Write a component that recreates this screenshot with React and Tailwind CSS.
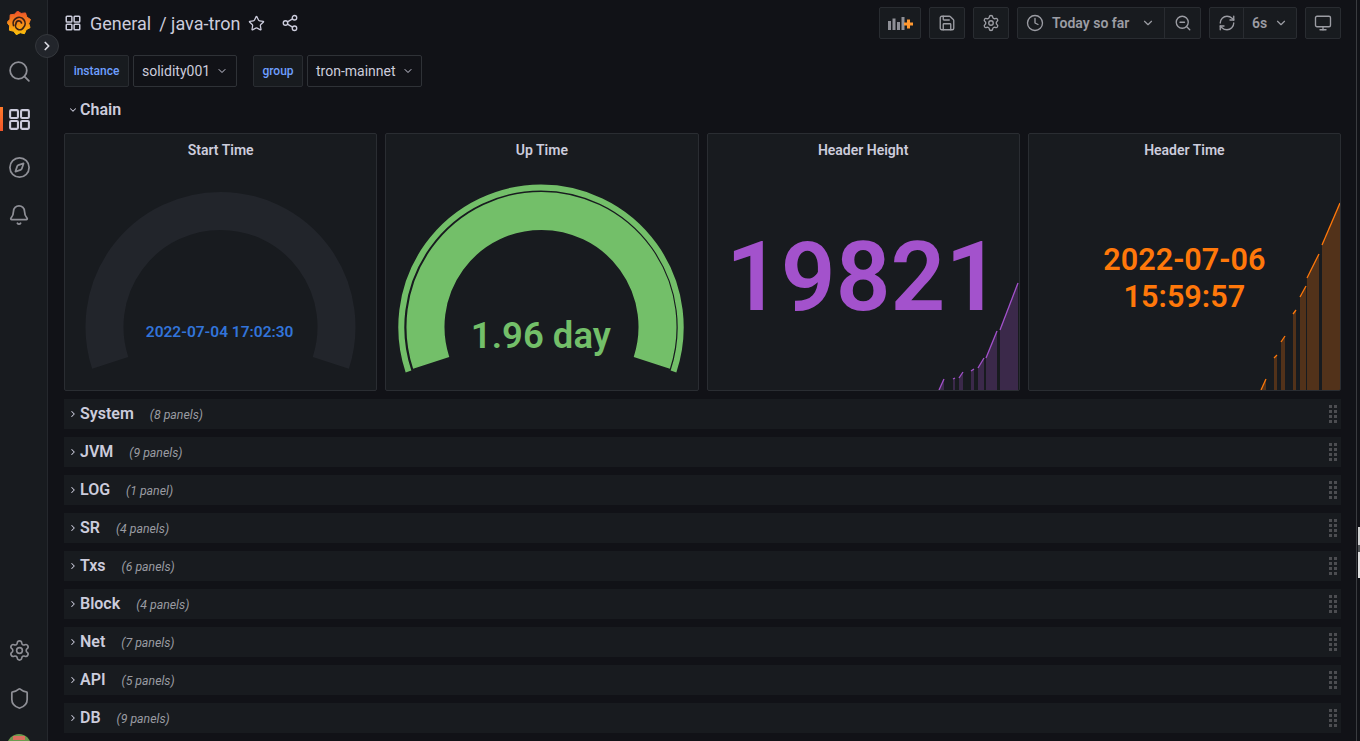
import { Search, Compass, Bell, Settings, Shield, Star, Share2, Save, Clock, ZoomOut, RefreshCw, Monitor, ChevronDown, ChevronRight } from 'lucide-react';

const ROWS = [
  { name: 'System', panels: '8 panels' },
  { name: 'JVM', panels: '9 panels' },
  { name: 'LOG', panels: '1 panel' },
  { name: 'SR', panels: '4 panels' },
  { name: 'Txs', panels: '6 panels' },
  { name: 'Block', panels: '4 panels' },
  { name: 'Net', panels: '7 panels' },
  { name: 'API', panels: '5 panels' },
  { name: 'DB', panels: '9 panels' },
];

// [x1, y1, x2, y2] for each bit of the sparkline, bottom of the chart is y=110 / y=195
const HEIGHT_SEGMENTS = [
  [20, 110, 25, 99], [34, 99, 36, 98], [40, 98, 44, 92], [52, 91, 55, 89],
  [59, 88, 65, 78], [67, 78, 78, 51], [81, 50, 99, 3],
];
const TIME_SEGMENTS = [
  [21, 195, 26, 184], [34, 163, 37, 160], [41, 147, 45, 141], [53, 119, 56, 115],
  [60, 102, 66, 91], [67, 83, 79, 59], [82, 50, 100, 8],
];

const TEETH = Array.from({ length: 18 }, (_, i) => {
  const a = (i / 18) * Math.PI * 2 - 0.3;
  const r = i % 2 === 0 ? 12 : 9.8;
  return `${(12 + Math.cos(a) * r).toFixed(2)},${(12 + Math.sin(a) * r).toFixed(2)}`;
}).join(' ');

function GrafanaLogo() {
  return (
    <svg width="24" height="24" viewBox="0 0 24 24">
      <defs>
        <linearGradient id="logoGrad" x1="0" y1="1" x2="0" y2="0">
          <stop offset="0" stopColor="#fcc20a" />
          <stop offset="1" stopColor="#f0502a" />
        </linearGradient>
      </defs>
      <polygon points={TEETH} fill="url(#logoGrad)" stroke="url(#logoGrad)" strokeLinejoin="round" />
      <path d="M6.500 14.500A6 6 0 1 1 16.500 16.500A4.200 4.200 0 0 1 9 12.500A2.800 2.800 0 0 1 14.500 12" fill="none" stroke="#3a2016" strokeWidth="1.700" strokeLinecap="round" />
    </svg>
  );
}

function GridIcon({ size = 24, className = '' }) {
  return (
    <svg width={size} height={size} viewBox="0 0 24 24" fill="none" stroke="currentColor" strokeWidth="2" className={className}>
      <rect x="3" y="3" width="7.500" height="7.500" rx="1" />
      <rect x="13.500" y="3" width="7.500" height="7.500" rx="1" />
      <rect x="3" y="13.500" width="7.500" height="7.500" rx="1" />
      <rect x="13.500" y="13.500" width="7.500" height="7.500" rx="1" />
    </svg>
  );
}

function AddPanelIcon() {
  return (
    <svg width="25" height="13" viewBox="0 0 25 13">
      <rect x="0" y="4" width="3" height="9" fill="#8e8f96" />
      <rect x="4.500" y="1.500" width="3" height="11.500" fill="#8e8f96" />
      <rect x="9" y="5" width="3" height="8" fill="#8e8f96" />
      <rect x="13.500" y="0" width="3" height="13" fill="#8e8f96" />
      <path d="M20.500 2.500v9M16 7h9" stroke="#ff9830" strokeWidth="3" />
    </svg>
  );
}

function SideItem({ children, active }) {
  return (
    <div className="relative h-12 flex items-center justify-center pr-[9px] text-[#8e8f96]">
      {active && <div className="absolute left-0 top-3 w-[3px] h-6 bg-gradient-to-b from-[#ff7a2a] to-[#f0562a]" />}
      {children}
    </div>
  );
}

function Sidebar() {
  return (
    <div className="w-12 h-[741px] shrink-0 flex flex-col bg-[#181b1f] border-r border-[#25282d] overflow-hidden">
      <div className="-mt-px">
        <SideItem><GrafanaLogo /></SideItem>
        <SideItem><Search size={25} strokeWidth={1.700} /></SideItem>
        <SideItem active><GridIcon size={25} className="text-[#ccccdc]" /></SideItem>
        <SideItem><Compass size={23} strokeWidth={1.800} /></SideItem>
        <SideItem><Bell size={22} strokeWidth={1.900} /></SideItem>
      </div>
      <div className="mt-auto -mb-[29px]">
        <SideItem><Settings size={23} strokeWidth={1.700} /></SideItem>
        <SideItem><Shield size={23} strokeWidth={1.800} /></SideItem>
        <SideItem>
          <div className="w-6 h-6 rounded-full bg-[#6c9a4e] overflow-hidden flex justify-center">
            <div className="w-3 h-1 mt-[2px] bg-[#d9705f]" />
          </div>
        </SideItem>
      </div>
    </div>
  );
}

function ToolButton({ children, className = '' }) {
  return (
    <div className={`h-8 flex items-center justify-center bg-[#181b1f] border border-[#292c31] rounded-[2px] text-[#9c9da4] ${className}`}>
      {children}
    </div>
  );
}

function Toolbar() {
  return (
    <div className="h-8 flex items-center">
      <GridIcon size={18} className="text-[#ccccdc]" />
      <span className="ml-2 text-[18px] text-[#ccccdc]">General</span>
      <span className="ml-2 text-[18px] text-[#ccccdc]">/ java-tron</span>
      <Star size={17} strokeWidth={1.800} className="ml-2 text-[#ccccdc]" />
      <Share2 size={18} strokeWidth={1.800} className="ml-4 text-[#ccccdc]" />
      <div className="ml-auto flex gap-2">
        <ToolButton className="w-[42px]"><AddPanelIcon /></ToolButton>
        <ToolButton className="w-9"><Save size={18} strokeWidth={1.800} /></ToolButton>
        <ToolButton className="w-9"><Settings size={18} strokeWidth={1.800} /></ToolButton>
        <ToolButton>
          <div className="w-[147px] h-full flex items-center pl-2 border-r border-[#292c31]">
            <Clock size={18} strokeWidth={1.800} />
            <span className="ml-2 text-sm font-semibold">Today so far</span>
            <ChevronDown size={14} className="ml-auto mr-[9px]" />
          </div>
          <div className="w-[35px] flex justify-center"><ZoomOut size={18} strokeWidth={1.800} /></div>
        </ToolButton>
        <ToolButton>
          <div className="w-[34px] h-full flex items-center justify-center border-r border-[#292c31]">
            <RefreshCw size={18} strokeWidth={1.800} />
          </div>
          <div className="w-[52px] flex items-center pl-[8px] text-sm font-semibold">
            6s
            <ChevronDown size={14} className="ml-[7px]" />
          </div>
        </ToolButton>
        <ToolButton className="w-9"><Monitor size={18} strokeWidth={1.800} /></ToolButton>
      </div>
    </div>
  );
}

function Variable({ label, value, labelWidth, selectWidth }) {
  return (
    <div className="flex gap-1">
      <div className={`h-8 ${labelWidth} flex items-center justify-center bg-[#181b1f] border border-[#292c31] rounded-[2px] text-xs font-medium text-[#6e9fff]`}>
        {label}
      </div>
      <div className={`h-8 ${selectWidth} flex items-center pl-2 border border-[#2f3237] rounded-[2px] bg-[#111217] text-sm text-[#ccccdc]`}>
        {value}
        <ChevronDown size={12} className="ml-[6px]" />
      </div>
    </div>
  );
}

function Panel({ title, children }) {
  return (
    <div className="relative h-[258px] flex flex-col bg-[#181b1f] border border-[#2a2d32] rounded-[2px] overflow-hidden">
      <div className="h-[32px] flex items-center justify-center text-sm font-semibold text-[#ccccdc] z-10">{title}</div>
      {children}
    </div>
  );
}

function Gauge({ full, value, valueClass }) {
  return (
    <>
      <svg className="absolute -left-px -top-px" width="313" height="258" viewBox="0 0 313 258">
        {full && <path d="M23.500 238.500 A139.700 139.700 0 1 1 288.500 238.500" fill="none" stroke="#73bf69" strokeWidth="6" />}
        <path
          d="M46.200 229.800 A116 116 0 1 1 266.800 229.800"
          fill="none"
          stroke={full ? '#73bf69' : '#22252b'}
          strokeWidth="38"
        />
      </svg>
      <div className={`absolute left-0 right-[2px] text-center font-semibold ${valueClass}`}>{value}</div>
    </>
  );
}

function Sparkline({ segments, color, width, height }) {
  return (
    <svg className="absolute right-0 bottom-0" width={width} height={height} viewBox={`0 0 ${width} ${height}`}>
      {segments.map(([x1, y1, x2, y2]) => (
        <g key={x1}>
          <polygon points={`${x1},${height} ${x1},${y1} ${x2},${y2} ${x2},${height}`} fill={color} fillOpacity="0.25" />
          <line x1={x1} y1={y1} x2={x2} y2={y2} stroke={color} strokeWidth="1.300" />
        </g>
      ))}
    </svg>
  );
}

function CollapsedRow({ name, panels }) {
  return (
    <div className="h-[30px] flex items-center bg-[#181b1f] pl-[4px] pr-[4px]">
      <ChevronRight size={10} strokeWidth={2.500} className="text-[#ccccdc]" />
      <span className="ml-[2px] text-base font-semibold text-[#ccccdc]">{name}</span>
      <span className="ml-4 pt-[2px] text-[12.300px] italic text-[#9a9ba2]">({panels})</span>
      <div className="ml-auto grid grid-cols-2 gap-x-[2px] gap-y-[2.300px]">
        {Array.from({ length: 8 }, (_, i) => (
          <div key={i} className="w-[3px] h-[3px] bg-[#4c4d51]" />
        ))}
      </div>
    </div>
  );
}

export default function App() {
  return (
    <div className="relative w-[1360px] h-[741px] flex overflow-hidden bg-[#111217] font-['Roboto',sans-serif]">
      <Sidebar />
      <div className="absolute left-[35px] top-[34px] w-6 h-6 rounded-full bg-[#22252b] border border-[#34373c] flex items-center justify-center text-[#d8d8e0]">
        <ChevronRight size={14} strokeWidth={3} />
      </div>

      <div className="flex-1 min-w-0 pl-4 pr-[15px] pt-[7px]">
        <Toolbar />
        <div className="mt-4 flex gap-4">
          <Variable label="instance" value="solidity001" labelWidth="w-[65px]" selectWidth="w-[104px]" />
          <Variable label="group" value="tron-mainnet" labelWidth="w-[50px]" selectWidth="w-[115px]" />
        </div>
        <div className="h-[46px] flex items-center pl-[4px] pb-[1px]">
          <ChevronDown size={10} strokeWidth={2.500} className="text-[#ccccdc]" />
          <span className="ml-[2px] text-base font-semibold text-[#ccccdc]">Chain</span>
        </div>

        <div className="grid grid-cols-4 gap-2">
          <Panel title="Start Time">
            <Gauge value="2022-07-04 17:02:30" valueClass="top-[186px] text-[15.500px] leading-6 text-[#3274d9]" />
          </Panel>
          <Panel title="Up Time">
            <Gauge full value="1.96 day" valueClass="top-[180px] text-[36.500px] leading-[44px] text-[#73bf69]" />
          </Panel>
          <Panel title="Header Height">
            <Sparkline segments={HEIGHT_SEGMENTS} color="#a352cc" width={100} height={110} />
            <div className="flex-1 flex items-center justify-center pb-[2px] text-[96px] leading-none font-semibold text-[#a352cc]">19821</div>
          </Panel>
          <Panel title="Header Time">
            <Sparkline segments={TIME_SEGMENTS} color="#ff780a" width={100} height={195} />
            <div className="relative flex-1 flex flex-col items-center justify-center text-[30.600px] leading-[37px] font-semibold text-[#ff780a]">
              <div>2022-07-06</div>
              <div>15:59:57</div>
            </div>
          </Panel>
        </div>

        <div className="mt-2 flex flex-col gap-2">
          {ROWS.map((r) => <CollapsedRow key={r.name} name={r.name} panels={r.panels} />)}
        </div>
      </div>

      <div className="w-1 shrink-0 border-l border-[#3a3c40] pl-[1px] flex flex-col">
        <div className="h-[527px]" />
        <div className="h-[18px] bg-[#d4d4d4]" />
        <div className="h-[7px] bg-[#55575a]" />
        <div className="h-[26px] bg-[#e2e2e2]" />
      </div>
    </div>
  );
}
